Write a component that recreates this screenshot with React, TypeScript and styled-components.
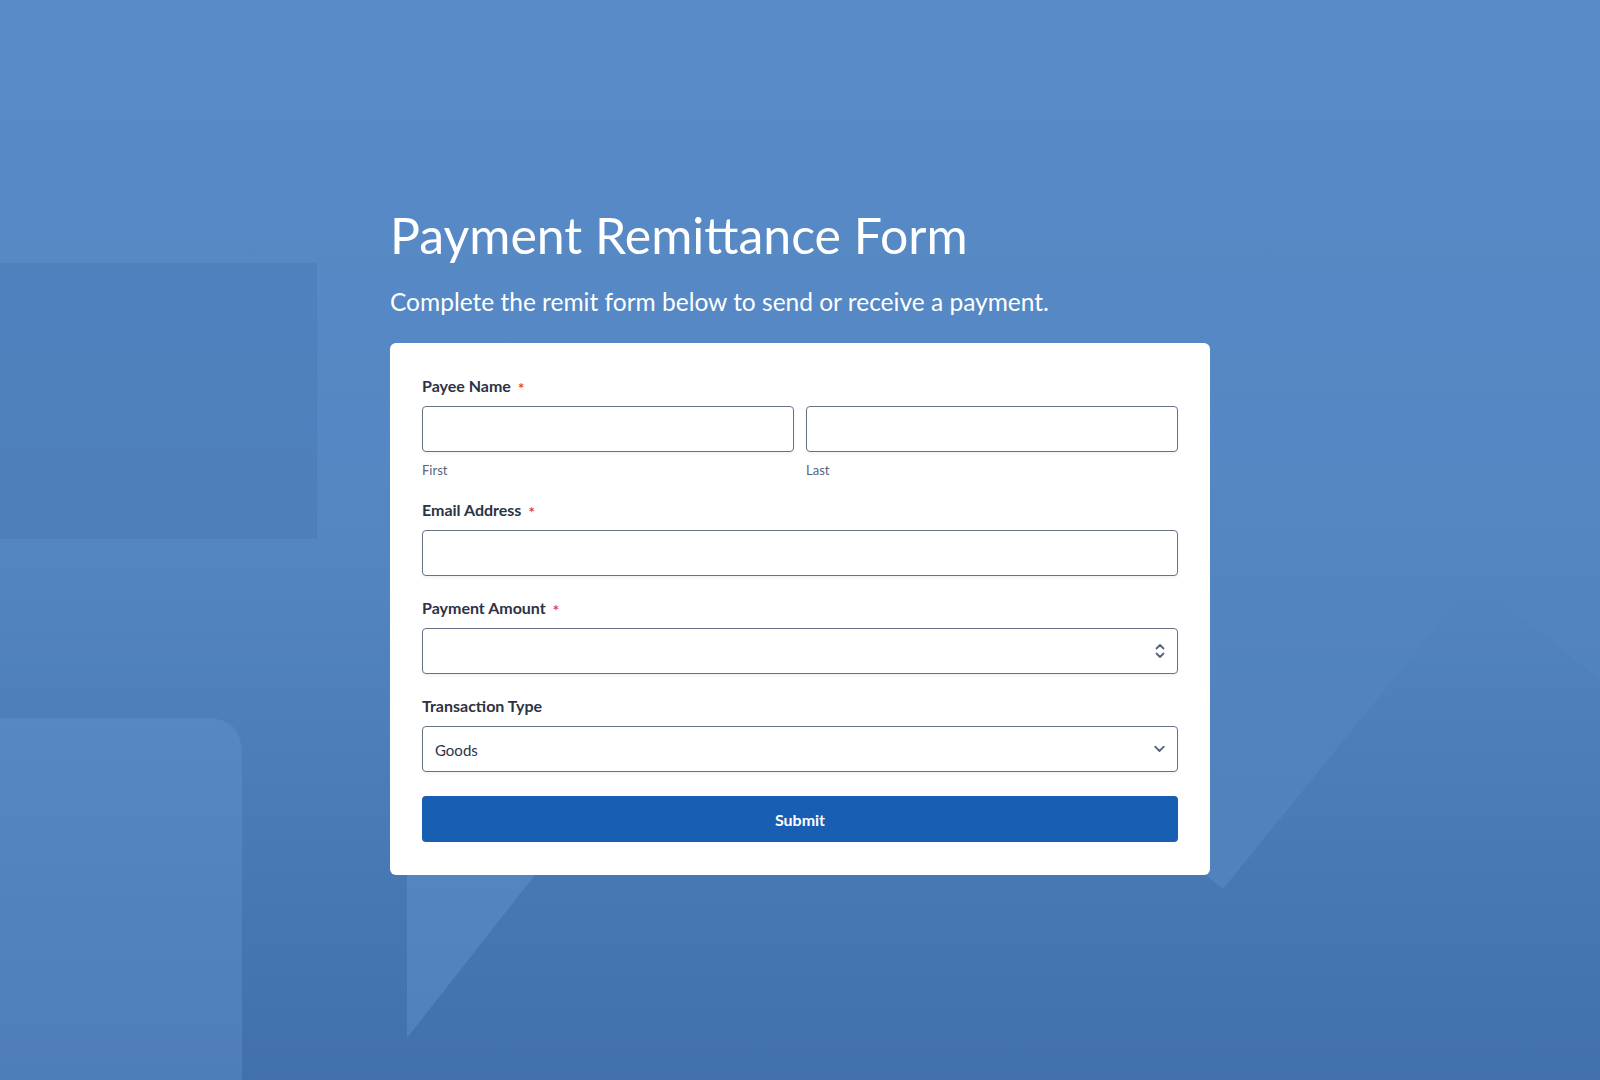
import styled, { createGlobalStyle } from "styled-components";

const GlobalStyle = createGlobalStyle`
  * { box-sizing: border-box; }
  body {
    margin: 0;
    font-family: Lato, "Open Sans", "Liberation Sans", sans-serif;
  }
`

const Page = styled.main`
  position: relative;
  min-height: 100vh;
  overflow: hidden;
  background: #5587c3;
`

const Backdrop = styled.svg`
  position: absolute;
  inset: 0;
  width: 100%;
  height: 100%;
  pointer-events: none;
`

const Content = styled.div`
  position: relative;
  width: 820px;
  margin: 0 auto;
  padding: 205px 0 80px;
`

const Title = styled.h1`
  margin: 0;
  font-size: 50px;
  line-height: 1.2;
  font-weight: 400;
  color: #ffffff;
`

const Subtitle = styled.p`
  margin: 22px 0 27px;
  font-size: 24.5px;
  line-height: 1.2;
  font-weight: 400;
  color: #ffffff;
`

const Card = styled.form`
  display: flex;
  flex-direction: column;
  gap: 22px;
  padding: 33px 32px;
  background: #ffffff;
  border-radius: 6px;
`

const Field = styled.div`
  display: flex;
  flex-direction: column;
`

const Label = styled.label`
  display: flex;
  align-items: flex-start;
  margin-bottom: 10px;
  font-size: 16px;
  line-height: 20px;
  font-weight: 700;
  color: #2c3345;
`

const Required = styled.span`
  margin: 5px 0 0 7px;
  font-size: 15px;
  line-height: 15px;
  color: #f23a3c;
`

const NameRow = styled.div`
  display: grid;
  grid-template-columns: 1fr 1fr;
  gap: 12px;
`

const NamePart = styled.div`
  display: flex;
  flex-direction: column;
`

const SubLabel = styled.span`
  margin-top: 10px;
  font-size: 13px;
  line-height: 16px;
  color: #57647e;
`

const Input = styled.input`
  width: 100%;
  height: 46px;
  padding: 0 12px;
  border: 1px solid #6a7286;
  border-radius: 4px;
  background: #ffffff;
  box-shadow: 0 2px 3px rgba(24, 37, 66, 0.05);
  font: inherit;
  font-size: 15px;
  color: #2c3345;
  outline: none;
  -moz-appearance: textfield;

  &::-webkit-inner-spin-button,
  &::-webkit-outer-spin-button {
    -webkit-appearance: none;
    margin: 0;
  }
`

const ControlWrap = styled.div`
  position: relative;
`

const Select = styled.select`
  width: 100%;
  height: 46px;
  padding: 2px 36px 0 12px;
  border: 1px solid #6a7286;
  border-radius: 4px;
  background: #ffffff;
  box-shadow: 0 2px 3px rgba(24, 37, 66, 0.05);
  appearance: none;
  font: inherit;
  font-size: 15px;
  color: #2c3345;
  outline: none;
`

const ControlIcon = styled.svg`
  position: absolute;
  right: 13px;
  top: 50%;
  transform: translateY(-50%);
  pointer-events: none;
`

const SubmitButton = styled.button`
  height: 46px;
  margin-top: 2px;
  border: none;
  border-radius: 4px;
  background: #185eb3;
  color: #ffffff;
  font: inherit;
  font-size: 16px;
  font-weight: 700;
  cursor: pointer;
`

const Background = () => (
  <Backdrop viewBox="0 0 1600 1080" preserveAspectRatio="none">
    <defs>
      <linearGradient id="base" x1="0" y1="0" x2="0" y2="1">
        <stop offset="0%" stopColor="#588bc7" />
        <stop offset="50%" stopColor="#5486c2" />
        <stop offset="100%" stopColor="#4170ab" />
      </linearGradient>
      <linearGradient id="fadeIn" gradientUnits="userSpaceOnUse" x1="0" y1="560" x2="0" y2="900">
        <stop offset="0%" stopColor="#6a9ad3" stopOpacity="0" />
        <stop offset="100%" stopColor="#6a9ad3" stopOpacity="0.32" />
      </linearGradient>
    </defs>
    <rect x="0" y="0" width="1600" height="1080" fill="url(#base)" />
    <rect x="0" y="263" width="317" height="276" fill="#3a6aa6" opacity="0.25" />
    <path d="M0 718 H206 Q242 718 242 754 V1080 H0 Z" fill="#6a9ad3" opacity="0.33" />
    <polygon points="407,1038 407,560 782,560" fill="#6a9ad3" opacity="0.38" />
    <path d="M1150 830 L1223 889 L1455 603 Q1475 580 1497 598 L1600 680 L1600 560 L1150 560 Z" fill="url(#fadeIn)" />
  </Backdrop>
)

const App = () => {
  return (
    <Page>
      <GlobalStyle />
      <Background />
      <Content>
        <Title>Payment Remittance Form</Title>
        <Subtitle>Complete the remit form below to send or receive a payment.</Subtitle>

        <Card onSubmit={(e) => e.preventDefault()}>
          <Field>
            <Label htmlFor="first_name">
              Payee Name<Required>*</Required>
            </Label>
            <NameRow>
              <NamePart>
                <Input type="text" id="first_name" />
                <SubLabel>First</SubLabel>
              </NamePart>
              <NamePart>
                <Input type="text" id="last_name" />
                <SubLabel>Last</SubLabel>
              </NamePart>
            </NameRow>
          </Field>

          <Field>
            <Label htmlFor="email">
              Email Address<Required>*</Required>
            </Label>
            <Input type="email" id="email" />
          </Field>

          <Field>
            <Label htmlFor="amount">
              Payment Amount<Required>*</Required>
            </Label>
            <ControlWrap>
              <Input type="number" id="amount" />
              <ControlIcon width="10" height="17" viewBox="0 0 10 17" fill="none">
                <path d="M1.5 6 L5 2.5 L8.5 6" stroke="#57647e" strokeWidth="1.8" strokeLinecap="round" strokeLinejoin="round" />
                <path d="M1.5 11 L5 14.5 L8.5 11" stroke="#57647e" strokeWidth="1.8" strokeLinecap="round" strokeLinejoin="round" />
              </ControlIcon>
            </ControlWrap>
          </Field>

          <Field>
            <Label htmlFor="transaction_type">Transaction Type</Label>
            <ControlWrap>
              <Select id="transaction_type" defaultValue="Goods">
                <option>Goods</option>
                <option>Services</option>
              </Select>
              <ControlIcon width="11" height="7" viewBox="0 0 11 7" fill="none">
                <path d="M1.2 1.2 L5.5 5.5 L9.8 1.2" stroke="#57647e" strokeWidth="1.8" strokeLinecap="round" strokeLinejoin="round" />
              </ControlIcon>
            </ControlWrap>
          </Field>

          <SubmitButton type="submit">Submit</SubmitButton>
        </Card>
      </Content>
    </Page>
  )
}

export default App;
